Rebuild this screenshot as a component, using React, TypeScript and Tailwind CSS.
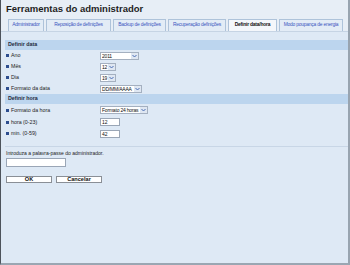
import type { ReactNode } from "react";

const tabs = [
  { label: "Administrador", w: "w-[36px]" },
  { label: "Reposição de definições", w: "w-[65px]" },
  { label: "Backup de definições", w: "w-[53px]" },
  { label: "Recuperação definições", w: "w-[58px]" },
  { label: "Definir data/hora", w: "w-[49px]", active: true },
  { label: "Modo poupança de energia", w: "w-[64px]" },
];

function Chevron() {
  return (
    <svg width="5" height="4" viewBox="0 0 5 4" className="text-[#4a6fb5]">
      <path d="M0.5 1 L2.5 3 L4.5 1" fill="none" stroke="currentColor" strokeWidth="1" />
    </svg>
  );
}

function FakeSelect({ value, w }: { value: string; w: string }) {
  return (
    <div className={`flex h-[8px] ${w} items-stretch border border-[#a4b0c0] bg-white`}>
      <span className="flex-1 overflow-hidden pl-[1px] text-[5px] leading-[6px] tracking-[-0.2px] text-[#111]">
        {value}
      </span>
      <span className="flex w-[7px] shrink-0 items-center justify-center bg-[#dfe7f2]">
        <Chevron />
      </span>
    </div>
  );
}

function FakeInput({ value, w }: { value: string; w: string }) {
  return (
    <div className={`h-[8px] ${w} border border-[#9aa6b6] bg-white pl-[1px] text-[5px] leading-[6px] text-[#111]`}>
      {value}
    </div>
  );
}

function Row({ label, h, children }: { label: string; h: string; children: ReactNode }) {
  return (
    <div className={`flex ${h} items-center`}>
      <div className="flex w-[94px] items-center gap-[2px]">
        <span className="h-[3px] w-[3px] bg-[#2c4d8e]" />
        <span className="text-[5.3px] leading-[7px] text-[#222]">{label}</span>
      </div>
      {children}
    </div>
  );
}

function Band({ title }: { title: string }) {
  return (
    <div className="flex h-[10px] items-center bg-[#bcd5ee] pl-[3px] text-[5.3px] font-bold text-[#1c2a3c]">
      {title}
    </div>
  );
}

export default function App() {
  return (
    <div className="flex h-[265px] w-[350px] flex-col overflow-hidden whitespace-nowrap border-b-2 border-l border-r-2 border-b-[#9aa6b2] border-l-[#4d535b] border-r-[#98a4b0] bg-[#dee9f5] font-['Liberation_Sans',Arial,sans-serif]">
      <div className="border-b border-[#c6d4e4] bg-[#e7eef6] pt-[3px]">
        <div className="h-[12px] pl-[5px] text-[9.5px] font-bold leading-[12px] text-[#1e1e1e]">
          Ferramentas do administrador
        </div>
        <div className="mt-[4px] flex gap-[2px] pl-[7px]">
          {tabs.map((t) => (
            <div
              key={t.label}
              className={`flex h-[12px] ${t.w} items-center justify-center overflow-hidden border border-b-0 border-[#aec3da] text-[4.9px] leading-none tracking-[-0.2px] ${
                t.active ? "bg-[#f4f7fb] font-bold text-[#111]" : "bg-[#e3ecf6] text-[#3a55c0]"
              }`}
            >
              {t.label}
            </div>
          ))}
        </div>
      </div>

      <div className="pl-[4px] pt-[8px]">
        <Band title="Definir data" />
        <div className="pl-[1px]">
          <Row label="Ano" h="h-[11px]">
            <FakeSelect value="2011" w="w-[39px]" />
          </Row>
          <Row label="Mês" h="h-[11px]">
            <FakeSelect value="12" w="w-[16px]" />
          </Row>
          <Row label="Dia" h="h-[11px]">
            <FakeSelect value="19" w="w-[16px]" />
          </Row>
          <Row label="Formato da data" h="h-[11px]">
            <FakeSelect value="DD/MM/AAAA" w="w-[42px]" />
          </Row>
        </div>

        <Band title="Definir hora" />
        <div className="pl-[1px]">
          <Row label="Formato da hora" h="h-[12px]">
            <FakeSelect value="Formato 24 horas" w="w-[48px]" />
          </Row>
          <Row label="hora (0-23)" h="h-[12px]">
            <FakeInput value="12" w="w-[20px]" />
          </Row>
          <Row label="min. (0-59)" h="h-[11px]">
            <FakeInput value="42" w="w-[20px]" />
          </Row>
        </div>

        <div className="mt-[7px] border-t border-[#c8d6e6] pl-[1px] pt-[3px]">
          <div className="text-[5px] leading-[7px] text-[#222]">
            Introduza a palavra-passe do administrador.
          </div>
          <div className="mt-[1px] h-[9px] w-[60px] border border-[#9aa6b6] bg-white" />
          <div className="mt-[9px] flex gap-[4px]">
            <div className="flex h-[7px] w-[46px] items-center justify-center border border-[#8a8f96] bg-white text-[5.6px] font-bold leading-none text-[#111]">
              OK
            </div>
            <div className="flex h-[7px] w-[46px] items-center justify-center border border-[#8a8f96] bg-white text-[5.6px] font-bold leading-none text-[#111]">
              Cancelar
            </div>
          </div>
        </div>
      </div>
    </div>
  );
}
